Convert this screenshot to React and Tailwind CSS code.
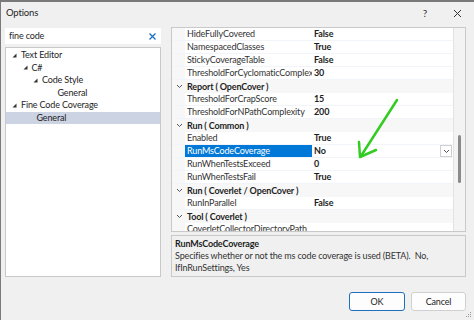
import React from 'react';

const font = { fontFamily: 'Lato, "Noto Sans", sans-serif' };

const rows = [
  { name: 'HideFullyCovered', value: 'False' },
  { name: 'NamespacedClasses', value: 'True' },
  { name: 'StickyCoverageTable', value: 'False' },
  { name: 'ThresholdForCyclomaticComplexity', value: '30' },
  { cat: 'Report ( OpenCover )' },
  { name: 'ThresholdForCrapScore', value: '15' },
  { name: 'ThresholdForNPathComplexity', value: '200' },
  { cat: 'Run ( Common )' },
  { name: 'Enabled', value: 'True' },
  { name: 'RunMsCodeCoverage', value: 'No', selected: true },
  { name: 'RunWhenTestsExceed', value: '0' },
  { name: 'RunWhenTestsFail', value: 'True' },
  { cat: 'Run ( Coverlet / OpenCover )' },
  { name: 'RunInParallel', value: 'False' },
  { cat: 'Tool ( Coverlet )' },
  { name: 'CoverletCollectorDirectoryPath', value: '' },
];

const tree = [
  { label: 'Text Editor', indent: 0, open: true },
  { label: 'C#', indent: 1, open: true },
  { label: 'Code Style', indent: 2, open: true },
  { label: 'General', indent: 3 },
  { label: 'Fine Code Coverage', indent: 0, open: true },
  { label: 'General', indent: 1, selected: true },
];

function Chevron() {
  return (
    <svg width="7" height="5" viewBox="0 0 7 5">
      <path d="M1 1 L3.5 3.5 L6 1" fill="none" stroke="#555" strokeWidth="1" />
    </svg>
  );
}

function Tri() {
  return (
    <svg width="5" height="5" viewBox="0 0 5 5">
      <path d="M4.5 0.5 L4.5 4.5 L0.5 4.5 Z" fill="#333" />
    </svg>
  );
}

function App() {
  return (
    <div style={font} className="w-[474px] h-[320px] bg-[#f0f0f0] border-t-2 border-l border-[#7a7a7a] text-[#1e1e1e] text-[9px] tracking-[-0.15px] relative overflow-hidden">
      {/* title bar */}
      <div className="h-[23px] flex items-center justify-between pl-[5px] pr-[12px]">
        <span className="text-[9.5px]">Options</span>
        <div className="flex items-center gap-[26px] text-[#333]">
          <span className="text-[10px]">?</span>
          <svg width="9" height="9" viewBox="0 0 9 9">
            <path d="M1 1 L8 8 M8 1 L1 8" stroke="#333" strokeWidth="1" />
          </svg>
        </div>
      </div>

      <div className="flex pl-[4px] gap-[10px] mt-[2px]">
        {/* left */}
        <div className="w-[156px] flex flex-col">
          <div className="h-[16px] mt-[1px] bg-white flex items-center justify-between pl-[4px] pr-[5px]">
            <span>fine code</span>
            <svg width="7" height="7" viewBox="0 0 7 7">
              <path d="M0.5 0.5 L6.5 6.5 M6.5 0.5 L0.5 6.5" stroke="#1a6fc4" strokeWidth="1.3" />
            </svg>
          </div>
          <div className="mt-[3px] h-[230px] bg-white border border-[#c9c9c9] pt-[1px]">
            {tree.map((t, i) => (
              <div
                key={i}
                className={`h-[12.5px] leading-[12.5px] flex items-center ${t.selected ? 'bg-[#ccd3e2]' : ''}`}
                style={{ paddingLeft: 6 + t.indent * 10.5 }}
              >
                <span className="w-[6px] flex items-center">{t.open && <Tri />}</span>
                <span className={t.open ? 'ml-[3px]' : 'ml-[8px]'}>{t.label}</span>
              </div>
            ))}
          </div>
        </div>

        {/* right */}
        <div className="w-[295px] flex flex-col">
          <div className="h-[205px] bg-white border border-[#c9c9c9] flex overflow-hidden relative">
            <div className="flex-1 overflow-hidden">
              {rows.map((r, i) =>
                r.cat ? (
                  <div key={i} className="h-[13px] leading-[13px] flex items-center bg-[#f7f7f7]">
                    <span className="w-[14px] flex justify-center"><Chevron /></span>
                    <span className="font-bold ml-[1px]">{r.cat}</span>
                  </div>
                ) : (
                  <div key={i} className="h-[13px] leading-[12px] flex items-center border-b border-[#f1f4f8]">
                    <span className="w-[13px] h-full bg-[#f7f7f7]" />
                    <span
                      className={`w-[127px] h-full pl-[2px] flex items-center whitespace-nowrap overflow-hidden ${r.selected ? 'bg-[#0078d7] text-white' : 'text-[#333]'}`}
                    >
                      {r.name}
                    </span>
                    <span className="flex-1 pl-[2px] font-bold flex items-center justify-between pr-[1px]">
                      {r.value}
                      {r.selected && (
                        <span className="w-[12px] h-[12px] border border-[#cfcfcf] bg-white flex items-center justify-center">
                          <Chevron />
                        </span>
                      )}
                    </span>
                  </div>
                )
              )}
            </div>
            <div className="w-[12px] border-l border-[#e3e3e3] bg-[#f3f3f3] flex justify-center">
              <div className="w-[3px] h-[48px] mt-[107px] rounded-full bg-[#8a8a8a]" />
            </div>
            {/* green arrow */}
            <svg className="absolute left-[185px] top-[70px]" width="44" height="64" viewBox="0 0 44 64">
              <path d="M40 2 L4 58" stroke="#33cc22" strokeWidth="2.5" fill="none" strokeLinecap="round" />
              <path d="M2 44 L3 59 L19 52" stroke="#33cc22" strokeWidth="2.5" fill="none" strokeLinecap="round" strokeLinejoin="round" />
            </svg>
          </div>
          <div className="mt-[3px] h-[42px] border border-[#c9c9c9] bg-[#f0f0f0] px-[3px] pt-[2px] leading-[12px]">
            <div className="font-bold">RunMsCodeCoverage</div>
            <div className="text-[#333]">
              Specifies whether or not the ms code coverage is used (BETA).&nbsp; No,
              <br />
              IfInRunSettings, Yes
            </div>
          </div>
          <div className="flex justify-end gap-[6px] mt-[15px]">
            <button className="w-[56px] h-[19px] bg-[#fdfdfd] border border-[#1f6fbf] rounded-[3px]">OK</button>
            <button className="w-[55px] h-[19px] bg-[#fdfdfd] border border-[#d0d0d0] rounded-[3px]">Cancel</button>
          </div>
        </div>
      </div>

      {/* resize grip */}
      <svg className="absolute right-[2px] bottom-[2px]" width="8" height="8" viewBox="0 0 8 8">
        <rect x="6" y="2" width="1" height="1" fill="#999" />
        <rect x="4" y="4" width="1" height="1" fill="#999" />
        <rect x="6" y="4" width="1" height="1" fill="#999" />
        <rect x="2" y="6" width="1" height="1" fill="#999" />
        <rect x="4" y="6" width="1" height="1" fill="#999" />
        <rect x="6" y="6" width="1" height="1" fill="#999" />
      </svg>
    </div>
  );
}

export default App;
